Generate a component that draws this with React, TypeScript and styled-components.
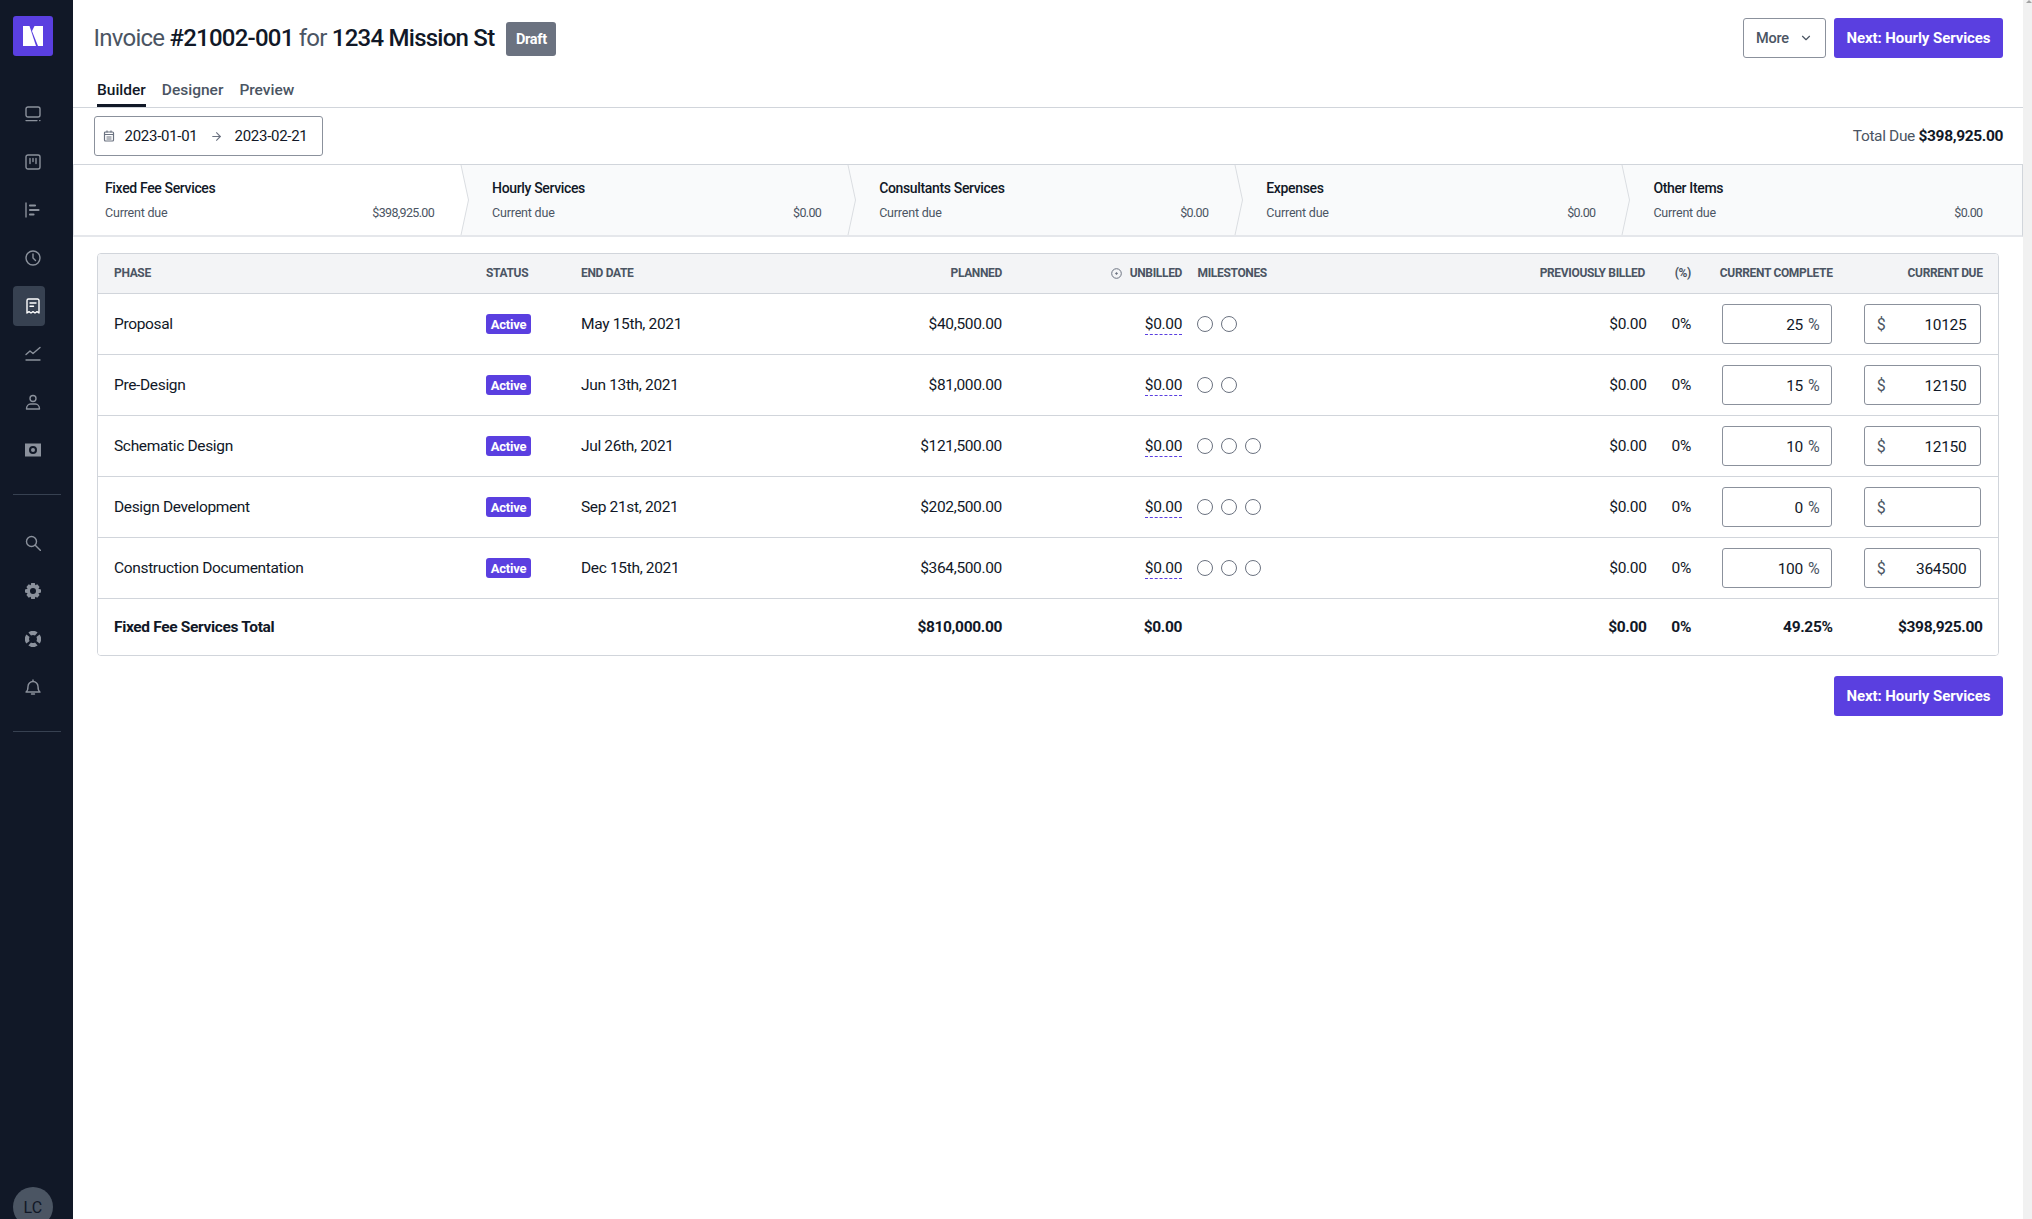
import React from "react";
import styled, { createGlobalStyle } from "styled-components";
import { ChevronDown, ArrowRight } from "lucide-react";

const Global = createGlobalStyle`
  html, body { margin: 0; padding: 0; height: 100%; background: #fff; }
  body { font-family: Roboto, "Noto Sans", sans-serif; color: #111827; overflow: hidden; }
  #root { height: 100%; }
  * { box-sizing: border-box; }
`;

const Shell = styled.div`display: flex; height: 1219px; overflow: hidden;`;
const Sidebar = styled.nav`
  width: 73px; flex: none; background: #111827; display: flex; flex-direction: column;
  align-items: flex-start; padding: 16px 0 0 13px; overflow: hidden;
`;
const Logo = styled.div`
  width: 40px; height: 40px; border-radius: 3px; background: #5a3fe0; display: flex;
  align-items: center; justify-content: center; flex: none; margin-bottom: 38px;
`;
const NavGroup = styled.div`display: flex; flex-direction: column; gap: 8px;`;
const NavItem = styled.div<{ $active?: boolean }>`
  width: 32px; height: 40px; padding-left: 12px; display: flex; align-items: center; border-radius: 4px;
  color: ${(p) => (p.$active ? "#fff" : "#8b919c")};
  background: ${(p) => (p.$active ? "#374151" : "transparent")};
`;
const SideDivider = styled.div`width: 48px; height: 1px; background: #374151; flex: none; margin: 24px 0 28px;`;
const Avatar = styled.div`
  width: 40px; height: 40px; flex: none; border-radius: 50%; background: #4b5563; color: #111827;
  margin-top: auto; margin-bottom: -8px; display: flex; align-items: center; justify-content: center;
  font-size: 16px; letter-spacing: .2px;
`;

const Main = styled.main`flex: 1; min-width: 0; display: flex; flex-direction: column;`;
const Track = styled.div`width: 9px; flex: none; background: #f1f1f1; display: flex; justify-content: flex-end; align-items: flex-start;`;

const TopRow = styled.div`display: flex; align-items: center; justify-content: space-between; padding: 18px 20px 0 20.5px;`;
const TitleWrap = styled.div`display: flex; align-items: center; gap: 12px;`;
const Title = styled.h1`
  margin: 0; font-size: 24px; line-height: 36px; font-weight: 400; color: #4b5563; letter-spacing: -.76px;
  b { font-weight: 500; color: #111827; }
`;
const Draft = styled.span`
  width: 50px; height: 34px; margin-top: 2px; border-radius: 3px; background: #6b7280; color: #fff; font-size: 14.5px; font-weight: 700;
  display: flex; align-items: center; justify-content: center; letter-spacing: -.3px;
`;
const Actions = styled.div`display: flex; gap: 8px;`;
const MoreButton = styled.button`
  width: 83px; height: 40px; padding: 0 12px; border: 1px solid #8b919c; border-radius: 3px; background: #fff; color: #4b5563;
  font: 500 14.5px Roboto, sans-serif; display: flex; align-items: center; justify-content: space-between; letter-spacing: -.2px;
`;
const NextButton = styled.button`
  width: 169px; height: 40px; padding: 0; border: 0; border-radius: 3px; background: #5a3fe0; color: #fff;
  font: 700 15px Roboto, sans-serif; letter-spacing: -.08px;
`;

const Tabs = styled.div`display: flex; gap: 16px; height: 50px; padding: 19px 0 0 24px; border-bottom: 1px solid #d1d5db;`;
const Tab = styled.div<{ $active?: boolean }>`
  height: 30px; padding-top: 3px; line-height: 20px; font-size: 15.5px; font-weight: 500; letter-spacing: 0;
  color: ${(p) => (p.$active ? "#111827" : "#4b5563")};
  border-bottom: 3px solid ${(p) => (p.$active ? "#111827" : "transparent")};
`;

const DateRow = styled.div`display: flex; align-items: center; justify-content: space-between; padding: 8px 20px 8px 20.5px;`;
const DateBox = styled.div`
  width: 229px; height: 40px; border: 1px solid #8b919c; border-radius: 3px; display: flex; align-items: center;
  padding-left: 8px; font-size: 15px; letter-spacing: -.27px; color: #111827;
`;
const DateText = styled.span`width: 73px; white-space: nowrap;`;
const ArrowWrap = styled.span`display: flex; width: 37px; justify-content: center; color: #6b7280;`;
const TotalDue = styled.div`
  font-size: 15.5px; color: #4b5563; letter-spacing: -.35px;
  b { font-weight: 700; color: #111827; }
`;

const Steps = styled.div`
  display: grid; grid-template-columns: repeat(5, 1fr); padding-right: 12.5px; height: 73px; background: #f9fafb;
  border-top: 1px solid #d1d5db; border-bottom: 2px solid #e5e7eb; border-right: 1px solid #d1d5db; border-left: 1px solid #e5e7eb;
`;
const Step = styled.div<{ $active?: boolean }>`
  position: relative; padding: 14px 27px 0 31px; background: ${(p) => (p.$active ? "#fff" : "transparent")};
`;
const StepTitle = styled.div`font-size: 14px; line-height: 18px; font-weight: 500; letter-spacing: -.35px; color: #111827;`;
const StepLine = styled.div`
  display: flex; justify-content: space-between; margin-top: 8px; font-size: 12.5px; line-height: 16px; color: #4b5563; letter-spacing: -.2px;
`;
const StepValue = styled.span`letter-spacing: -.65px;`;
const Chevron = styled.svg`position: absolute; top: 0; right: -8px; width: 8px; height: 100%; z-index: 1; overflow: visible;`;

const TableCard = styled.section`margin: 16px 24px 0 24px; border: 1px solid #d1d5db; border-radius: 4px; overflow: hidden;`;
const Row = styled.div<{ $kind?: "head" | "total" }>`
  display: grid; grid-template-columns: 372px 95px 200px 221px 180px 263px 200px 46px 141.6px 150px;
  align-items: center; padding: 0 16px ${(p) => (p.$kind ? "1px" : "0")};
  height: ${(p) => (p.$kind === "head" ? "40px" : p.$kind === "total" ? "56px" : "61px")};
  background: ${(p) => (p.$kind === "head" ? "#f3f4f6" : "#fff")};
  border-bottom: ${(p) => (p.$kind === "total" ? "0" : "1px solid #d1d5db")};
  font-size: ${(p) => (p.$kind === "head" ? "12px" : "15.5px")};
  font-weight: ${(p) => (p.$kind === "head" ? 700 : p.$kind === "total" ? 700 : 400)};
  letter-spacing: -.34px;
  color: ${(p) => (p.$kind === "head" ? "#4b5563" : "#111827")};
  text-transform: ${(p) => (p.$kind === "head" ? "uppercase" : "none")};
`;
const Cell = styled.div<{ $right?: boolean }>`
  text-align: ${(p) => (p.$right ? "right" : "left")}; white-space: nowrap; min-width: 0;
`;
const UnbilledHead = styled(Cell)`display: flex; justify-content: flex-end; align-items: center; gap: 8px;`;
const MilestoneCell = styled.div`display: flex; gap: 8px; padding-left: 14.5px; align-items: center;`;
const MilestoneHead = styled(Cell)`padding-left: 15.5px;`;
const Dot = styled.span`width: 16px; height: 16px; flex: none; border-radius: 50%; border: 1px solid #6b7280; background: #fff;`;
const Badge = styled.span`
  display: inline-flex; width: 45px; height: 20px; align-items: center; justify-content: center; border-radius: 3px;
  background: #5a3fe0; color: #fff; font-size: 13px; font-weight: 700; letter-spacing: -.25px;
`;
const Dashed = styled.span`display: inline-block; line-height: 20px; border-bottom: 1px dashed #5a3fe0;`;
const Shifted = styled(Cell)`margin-right: -1.5px;`;
const PercentBox = styled.div`
  justify-self: end; width: 109.5px; height: 40px; margin-right: 1px; border: 1px solid #8b919c; border-radius: 3px; display: flex;
  align-items: center; justify-content: flex-end; padding-right: 11px; gap: 5px;
`;
const DueBox = styled.div`
  justify-self: end; width: 117.5px; height: 40px; margin-right: 1.3px; border: 1px solid #8b919c; border-radius: 3px; display: flex;
  align-items: center; justify-content: space-between; padding: 0 14px 0 12px;
`;
const Unit = styled.span`color: #4b5563; font-size: 16px; letter-spacing: 0;`;
const BoxValue = styled.span`position: relative; top: 1px;`;
const BottomBar = styled.div`display: flex; justify-content: flex-end; padding: 20px 20px 0 0;`;

const I = ({ children }: { children: React.ReactNode }) => (
  <svg width="16" height="16" viewBox="0 0 16 16" fill="none" stroke="currentColor" strokeWidth="1.4" strokeLinecap="round" strokeLinejoin="round">{children}</svg>
);

const icons = [
  <I key="a"><rect x="1" y="1" width="14" height="10" rx="2" /><path d="M1 14.6h11M14.6 14.6h.4" /></I>,
  <I key="b"><rect x="1" y="1" width="14" height="14" rx="2" /><path d="M5 4.5v5M8 4.5v3M11 4.5v5" /></I>,
  <I key="c"><path d="M1 1v14" /><path d="M5 3.5h5M5 8h8.5M5 12.5h3.5" strokeWidth="2.2" /></I>,
  <I key="d"><circle cx="8" cy="8" r="7" /><path d="M8 4v4l2.5 2.5" /></I>,
  <I key="e"><path d="M2 15V2.500A1.500 1.500 0 0 1 3.500 1h9A1.500 1.500 0 0 1 14 2.500V15l-2-1.300L10 15l-2-1.300L6 15l-2-1.300z" /><path d="M5 5h6M5 8.200h3.500" /></I>,
  <I key="f"><path d="M1 8.500 5 5l3 2.500L15 1.500" /><path d="M1 14h14" /></I>,
  <I key="g"><circle cx="8" cy="4.500" r="3" /><path d="M1.500 15c0-3 2-5 4-5h5c2 0 4 2 4 5z" /></I>,
  <svg key="h" width="16" height="16" viewBox="0 0 16 16"><path fill="currentColor" fillRule="evenodd" d="M0 1.500h16v13H0zM8 4a4 4 0 1 0 0 8 4 4 0 0 0 0-8zm0 2a2 2 0 1 1 0 4 2 2 0 0 1 0-4z" /></svg>,
];
const icons2 = [
  <I key="s"><circle cx="6.500" cy="6.500" r="5" /><path d="m10.500 10.500 5 5" /></I>,
  <svg key="t" width="16" height="16" viewBox="0 0 16 16"><path fill="currentColor" fillRule="evenodd" d="M6.200 0h3.600l.5 2.200 2-.9 2.300 2.600-1.200 1.900 2.600.6v3.200l-2.600.6 1.200 1.900-2.300 2.600-2-.9-.5 2.200H6.200l-.5-2.200-2 .9-2.300-2.600 1.200-1.900L0 9.600V6.400l2.600-.6-1.200-1.900 2.300-2.600 2 .9zM8 5a3 3 0 1 0 0 6 3 3 0 0 0 0-6z" /></svg>,
  <svg key="u" width="16" height="16" viewBox="0 0 16 16"><path fill="currentColor" d="M3.400 1.400A8 8 0 0 1 12.600 1.400L10 4.600a4 4 0 0 0-4 0zM1.400 3.400 4.600 6a4 4 0 0 0 0 4L1.400 12.600A8 8 0 0 1 1.400 3.400zM14.600 3.400A8 8 0 0 1 14.600 12.600L11.400 10a4 4 0 0 0 0-4zM6 11.400a4 4 0 0 0 4 0l2.600 3.200a8 8 0 0 1-9.200 0z" /></svg>,
  <I key="v"><path d="M1 13c1.500-1 2-2.500 2-5.500a5 5 0 0 1 10 0c0 3 .5 4.500 2 5.500z" /><path d="M8 1v1M6.500 15h3" /></I>,
];

const rows = [
  { name: "Proposal", date: "May 15th, 2021", planned: "$40,500.00", dots: 2, pct: "25", due: "10125" },
  { name: "Pre-Design", date: "Jun 13th, 2021", planned: "$81,000.00", dots: 2, pct: "15", due: "12150" },
  { name: "Schematic Design", date: "Jul 26th, 2021", planned: "$121,500.00", dots: 3, pct: "10", due: "12150" },
  { name: "Design Development", date: "Sep 21st, 2021", planned: "$202,500.00", dots: 3, pct: "0", due: "" },
  { name: "Construction Documentation", date: "Dec 15th, 2021", planned: "$364,500.00", dots: 3, pct: "100", due: "364500" },
];
const steps = [
  { t: "Fixed Fee Services", v: "$398,925.00" },
  { t: "Hourly Services", v: "$0.00" },
  { t: "Consultants Services", v: "$0.00" },
  { t: "Expenses", v: "$0.00" },
  { t: "Other Items", v: "$0.00" },
];

export default function App() {
  return (
    <Shell>
      <Global />
      <Sidebar>
        <Logo>
          <svg width="20" height="20" viewBox="0 0 20 20">
            <path fill="#fff" d="M0 0h6.500L13 20H0z" />
            <path fill="#fff" d="M11.500 0H20v20h-5L9 5z" />
          </svg>
        </Logo>
        <NavGroup>
          {icons.map((ic, i) => <NavItem key={i} $active={i === 4}>{ic}</NavItem>)}
        </NavGroup>
        <SideDivider />
        <NavGroup>
          {icons2.map((ic, i) => <NavItem key={i}>{ic}</NavItem>)}
        </NavGroup>
        <SideDivider />
        <Avatar>LC</Avatar>
      </Sidebar>
      <Main>
        <TopRow>
          <TitleWrap>
            <Title>Invoice <b>#21002-001</b> for <b>1234 Mission St</b></Title>
            <Draft>Draft</Draft>
          </TitleWrap>
          <Actions>
            <MoreButton>More <ChevronDown size={14} /></MoreButton>
            <NextButton>Next: Hourly Services</NextButton>
          </Actions>
        </TopRow>
        <Tabs>
          <Tab $active>Builder</Tab>
          <Tab>Designer</Tab>
          <Tab>Preview</Tab>
        </Tabs>
        <DateRow>
          <DateBox>
            <svg width="12" height="12" viewBox="0 0 12 12" fill="none" stroke="#6b7280" strokeWidth="1.2" style={{ marginRight: 10 }}>
              <rect x="1.500" y="2" width="9" height="9" rx="1" /><path d="M1.500 4.500h9M4 .5v2M8 .5v2M3.500 7h5M3.500 9h5" />
            </svg>
            <DateText>2023-01-01</DateText>
            <ArrowWrap><ArrowRight size={13} /></ArrowWrap>
            <DateText>2023-02-21</DateText>
          </DateBox>
          <TotalDue>Total Due <b>$398,925.00</b></TotalDue>
        </DateRow>
        <Steps>
          {steps.map((s, i) => (
            <Step key={s.t} $active={i === 0}>
              <StepTitle>{s.t}</StepTitle>
              <StepLine><span>Current due</span><StepValue>{s.v}</StepValue></StepLine>
              {i < 4 && (
                <Chevron viewBox="0 0 8 72" preserveAspectRatio="none">
                  <path d="M0 0 7.500 36 0 72" fill={i === 0 ? "#fff" : "#f9fafb"} stroke="#d9dce1" strokeWidth="1" />
                </Chevron>
              )}
            </Step>
          ))}
        </Steps>
        <TableCard>
          <Row $kind="head">
            <Cell>Phase</Cell>
            <Cell>Status</Cell>
            <Cell>End Date</Cell>
            <Cell $right>Planned</Cell>
            <UnbilledHead>
              <svg width="11" height="11" viewBox="0 0 11 11" fill="none" stroke="#6b7280"><circle cx="5.500" cy="5.500" r="4.800" /><circle cx="5.500" cy="5.500" r=".8" fill="#6b7280" /></svg>
              Unbilled
            </UnbilledHead>
            <MilestoneHead>Milestones</MilestoneHead>
            <Cell $right>Previously Billed</Cell>
            <Cell $right>(%)</Cell>
            <Cell $right>Current Complete</Cell>
            <Cell $right>Current Due</Cell>
          </Row>
          {rows.map((r) => (
            <Row key={r.name}>
              <Cell>{r.name}</Cell>
              <Cell><Badge>Active</Badge></Cell>
              <Cell>{r.date}</Cell>
              <Cell $right>{r.planned}</Cell>
              <Cell $right><Dashed>$0.00</Dashed></Cell>
              <MilestoneCell>{Array.from({ length: r.dots }, (_, i) => <Dot key={i} />)}</MilestoneCell>
              <Shifted $right>$0.00</Shifted>
              <Cell $right>0%</Cell>
              <PercentBox><BoxValue>{r.pct}</BoxValue><Unit>%</Unit></PercentBox>
              <DueBox><Unit>$</Unit><BoxValue>{r.due}</BoxValue></DueBox>
            </Row>
          ))}
          <Row $kind="total">
            <Cell>Fixed Fee Services Total</Cell>
            <Cell />
            <Cell />
            <Cell $right>$810,000.00</Cell>
            <Cell $right>$0.00</Cell>
            <Cell />
            <Shifted $right>$0.00</Shifted>
            <Cell $right>0%</Cell>
            <Cell $right>49.25%</Cell>
            <Cell $right>$398,925.00</Cell>
          </Row>
        </TableCard>
        <BottomBar><NextButton>Next: Hourly Services</NextButton></BottomBar>
      </Main>
      <Track>
        <svg width="6" height="3" viewBox="0 0 6 3"><path d="M0 3 3 0l3 3z" fill="#a3a3a3" /></svg>
      </Track>
    </Shell>
  );
}
